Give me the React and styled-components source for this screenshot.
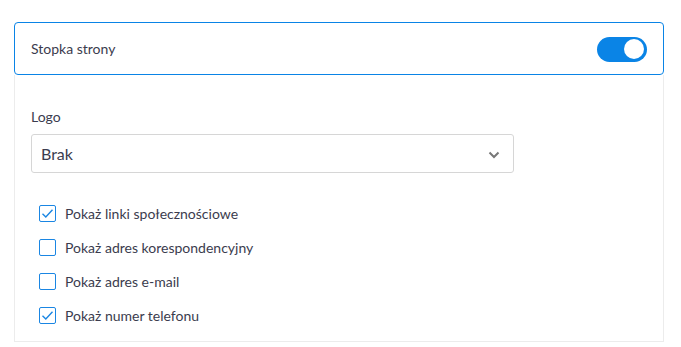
import styled, { createGlobalStyle } from "styled-components";

const GlobalStyle = createGlobalStyle`
  html, body {
    margin: 0;
    padding: 0;
    background: #ffffff;
    font-family: Lato, "Open Sans", sans-serif;
  }
`;

const options = [
  { label: "Pokaż linki społecznościowe", checked: true },
  { label: "Pokaż adres korespondencyjny", checked: false },
  { label: "Pokaż adres e-mail", checked: false },
  { label: "Pokaż numer telefonu", checked: true },
];

export default function App() {
  return (
    <Page>
      <GlobalStyle />
      <Section>
        <Header>
          <Title>Stopka strony</Title>
          <Toggle $on />
        </Header>
        <Body>
          <FieldLabel>Logo</FieldLabel>
          <Select>
            <span>Brak</span>
            <svg width="12" height="8" viewBox="0 0 12 8" fill="none">
              <path d="M1.5 1.5 L6 6 L10.5 1.5" stroke="#777" strokeWidth="2" />
            </svg>
          </Select>
          <List>
            {options.map((o) => (
              <Row key={o.label}>
                <Box>
                  {o.checked && (
                    <svg width="13" height="11" viewBox="0 0 13 11" fill="none">
                      <path
                        d="M1.5 5.8 L4.8 9 L11.5 1.8"
                        stroke="#1a86e3"
                        strokeWidth="1.4"
                      />
                    </svg>
                  )}
                </Box>
                <RowText>{o.label}</RowText>
              </Row>
            ))}
          </List>
        </Body>
      </Section>
    </Page>
  );
}

const Page = styled.div`
  padding: 22px 17px 0 14px;
  width: 681px;
  box-sizing: border-box;
`;

const Section = styled.div`
  width: 650px;
`;

const Header = styled.div`
  height: 53px;
  box-sizing: border-box;
  border: 1px solid #0a84e6;
  border-radius: 4px;
  display: flex;
  align-items: center;
  justify-content: space-between;
  padding: 0 16px 0 16px;
`;

const Title = styled.div`
  font-size: 14px;
  color: #3b3c4e;
`;

const Toggle = styled.div`
  width: 50px;
  height: 25px;
  border-radius: 13px;
  background: ${({ $on }) => ($on ? "#0a84e6" : "#cfcfcf")};
  position: relative;
  margin-top: 1px;
  &::after {
    content: "";
    position: absolute;
    top: 2.5px;
    ${({ $on }) => ($on ? "right: 3px;" : "left: 3px;")}
    width: 20px;
    height: 20px;
    border-radius: 50%;
    background: #fff;
  }
`;

const Body = styled.div`
  border: 1px solid #ececec;
  border-top: none;
  padding: 32px 16px 9px 16px;
  height: 267px;
  box-sizing: border-box;
  display: flex;
  flex-direction: column;
`;

const FieldLabel = styled.div`
  font-size: 14px;
  line-height: 20px;
  color: #3b3c4e;
  margin-bottom: 7px;
`;

const Select = styled.div`
  width: 483px;
  height: 39px;
  box-sizing: border-box;
  border: 1px solid #d6d6d6;
  border-radius: 3px;
  display: flex;
  align-items: center;
  justify-content: space-between;
  padding: 0 13px 0 9px;
  font-size: 16px;
  color: #3b3c4e;
  svg {
    margin-top: 2px;
  }
`;

const List = styled.div`
  margin-top: 23px;
  display: flex;
  flex-direction: column;
`;

const Row = styled.div`
  height: 34px;
  display: flex;
  align-items: center;
  padding-left: 8px;
`;

const Box = styled.div`
  width: 17px;
  height: 17px;
  box-sizing: border-box;
  border: 1.5px solid #1a86e3;
  border-radius: 2px;
  display: flex;
  align-items: center;
  justify-content: center;
  margin-right: 9px;
  flex-shrink: 0;
`;

const RowText = styled.span`
  font-size: 14px;
  color: #3b3c4e;
`;
